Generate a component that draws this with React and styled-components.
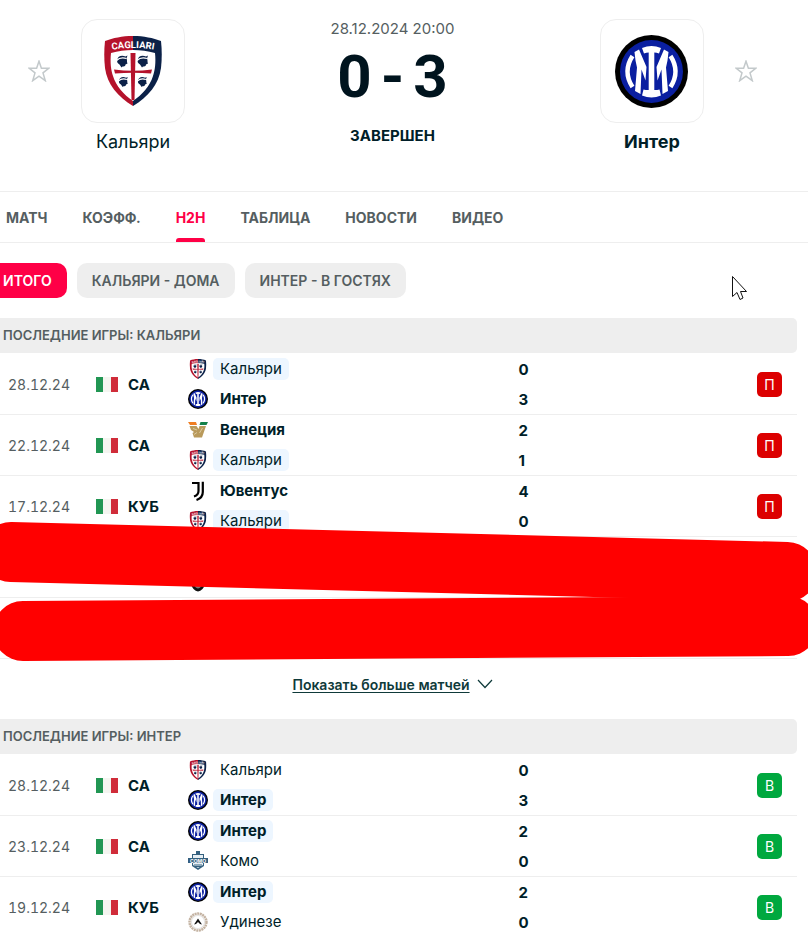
import React from 'react';
import styled, { createGlobalStyle } from 'styled-components';

const GlobalStyle = createGlobalStyle`
  * {
    box-sizing: border-box;
    margin: 0;
    padding: 0;
  }
  body {
    background: #fff;
    color: #001e28;
    font-family: Inter, "Liberation Sans", sans-serif;
  }
  button {
    border: 0;
    font-family: inherit;
    cursor: pointer;
  }
`
const Window = styled.div`
  position: relative;
  height: 100vh;
  overflow: hidden;
`
const Header = styled.header`
  display: flex;
  justify-content: space-between;
  align-items: flex-start;
  height: 192px;
  margin-left: -12px;
  padding: 19px 51px 0 40px;
  border-bottom: 1px solid #eee;
`
const Side = styled.div`
  display: flex;
  flex-direction: ${({ $away }) => ($away ? 'row-reverse' : 'row')};
  gap: 31px;
`
const StarButton = styled.button`
  display: flex;
  align-items: center;
  width: 22px;
  height: 104px;
  background: none;
`
const Team = styled.div`
  display: flex;
  flex-direction: column;
  align-items: center;
  width: 104px;
`
const Tile = styled.div`
  display: flex;
  align-items: center;
  justify-content: center;
  width: 104px;
  height: 104px;
  border: 1px solid #eee;
  border-radius: 16px;
`
const TeamName = styled.a`
  margin-top: 8px;
  color: #001e28;
  font-size: 18px;
  line-height: 22px;
  font-weight: ${({ $winner }) => ($winner ? 700 : 400)};
  text-decoration: none;
`
const Center = styled.div`
  display: flex;
  flex-direction: column;
  align-items: center;
`
const Time = styled.p`
  color: #555e61;
  font-size: 15px;
  line-height: 20px;
`
const Score = styled.p`
  display: flex;
  height: 76px;
  color: #00141e;
  font-family: Roboto, sans-serif;
  font-size: 60px;
  font-weight: 700;
  line-height: 76px;

  span {
    width: 38px;
    text-align: center;
  }
`
const Status = styled.p`
  margin-top: 11px;
  font-size: 15px;
  line-height: 20px;
  font-weight: 700;
`
const Tabs = styled.nav`
  display: flex;
  gap: 35px;
  height: 51px;
  padding-left: 6px;
  border-bottom: 1px solid #eee;
`
const Tab = styled.a`
  display: flex;
  flex-direction: column;
  justify-content: space-between;
  padding-top: 16px;
  color: ${({ $active }) => ($active ? '#ff0046' : '#555e61')};
  font-size: 14px;
  line-height: 20px;
  font-weight: 700;
  text-decoration: none;

  &::after {
    content: '';
    height: 4px;
    border-radius: 3px 3px 0 0;
    background: ${({ $active }) => ($active ? '#ff0046' : 'transparent')};
  }
`
const Main = styled.main`
  margin: 0 11px 0 -12px;
`
const Filters = styled.div`
  display: flex;
  gap: 10px;
  padding: 20px 0;
`
const Filter = styled.button`
  height: 35px;
  padding: 0 15px;
  border-radius: 10px;
  background: ${({ $active }) => ($active ? '#ff0046' : '#eee')};
  color: ${({ $active }) => ($active ? '#fff' : '#555e61')};
  font-size: 14px;
  font-weight: 600;
`
const Section = styled.section`
  position: relative;
`
const SectionTitle = styled.h2`
  height: 35px;
  margin-bottom: 1px;
  padding-left: 15px;
  border-radius: 5px;
  background: #eee;
  color: #555e61;
  font-size: 13px;
  font-weight: 600;
  line-height: 35px;
`
const Table = styled.table`
  width: 100%;
  table-layout: fixed;
  border-collapse: separate;
  border-spacing: 0;
`
const Cell = styled.td`
  height: 61px;
  border-bottom: 1px solid #eee;
  font-size: 15px;
`
const DateCell = styled(Cell)`
  width: 108px;
  padding-left: 20px;
  color: #555e61;
  font-size: 14px;
  font-variant-numeric: tabular-nums;
`
const LeagueCell = styled(Cell)`
  width: 92px;
  font-weight: 700;
`
const TeamsCell = styled(Cell)`
  width: 40%;
`
const ScoreCell = styled(Cell)`
  padding-left: 7px;
  font-weight: 700;
`
const ResultCell = styled(Cell)`
  width: 40px;
`
const League = styled.div`
  display: flex;
  align-items: center;
  gap: 10px;
`
const Flag = styled.span`
  width: 22px;
  height: 15px;
  background: linear-gradient(90deg, #219653 33%, #f4f5f0 33% 67%, #d02c3a 67%);
`
const Line = styled.div`
  display: flex;
  align-items: center;
  gap: 5px;
  height: 30px;
`
const Chip = styled.span`
  height: 22px;
  padding: 0 7px;
  border-radius: 5px;
  background: ${({ $marked }) => ($marked ? '#edf6ff' : 'transparent')};
  font-weight: ${({ $bold }) => ($bold ? 700 : 400)};
  line-height: 22px;
`
const Badge = styled.button`
  display: block;
  width: 25px;
  height: 25px;
  border-radius: 5px;
  background: ${({ $win }) => ($win ? '#00a83f' : '#dc0000')};
  color: #fff;
  font-size: 14px;
  line-height: 25px;
`
const More = styled.div`
  display: flex;
  justify-content: center;
  align-items: center;
  gap: 7px;
  height: 50px;
  margin-bottom: 10px;

  a {
    color: #0f3a3a;
    font-size: 14px;
    font-weight: 600;
    text-underline-offset: 2px;
  }
`
const Strokes = styled.svg`
  position: absolute;
  top: 200px;
  left: 0;
  width: 100%;
  height: 150px;
  overflow: visible;
  pointer-events: none;
`
const Cursor = styled.svg`
  position: absolute;
  top: 275px;
  left: 731px;
`

const Star = () => (
  <svg width="22" height="22" viewBox="0 0 22 22" fill="none" stroke="#c3c9cb" strokeWidth="1.5">
    <path d="M11 1.2 13.4 8.2H21L15 12.9 17.3 20.7 11 16.2 4.7 20.7 7 12.9 1 8.2H8.6Z" />
  </svg>
)

const Head = ({ x, y, s = 1 }) => (
  <g transform={`translate(${x} ${y}) scale(${s})`}>
    <path d="M-5-2C-5-5-1-7 3-5L5-6 4-3C5-1 4 0 5 2L3 3C3 5 1 5 0 5L-1 6-3 3C-5 2-6 0-5-2Z" fill="#0b2148" />
    <path d="M-6-1C-3-4 1-4 4-3" stroke="#fff" strokeWidth="1.3" fill="none" />
  </g>
)

const Cagliari = ({ w, h }) => (
  <svg width={w} height={h} viewBox="0 0 58 70">
    <path d="M29 0C18 0 9 2 1 5 0 14 0 23 1 32 3 48 14 61 29 70Z" fill="#b5122b" />
    <path d="M29 0C40 0 49 2 57 5 58 14 58 23 57 32 55 48 44 61 29 70Z" fill="#0b2148" />
    <path d="M7 17C21 13 37 13 51 17 52 27 51 34 49 40 46 50 38 59 29 65 20 59 12 50 9 40 7 34 6 27 7 17Z" fill="#fff" />
    <path d="M26.500 17H31.500L30.500 64H27.500Z" fill="#b5122b" />
    <path d="M10 33.500Q29 36 48 33.500L47 37.500Q29 36 11 37.500Z" fill="#b5122b" />
    <Head x={18.500} y={25.500} />
    <Head x={39} y={25.500} />
    <Head x={19.500} y={46} s={0.850} />
    <Head x={38.500} y={46} s={0.850} />
    <path id="arc" d="M4 14.500Q29 9.500 54 14.500" fill="none" />
    <text fill="#fff" fontSize="9.500" fontWeight="700" fontFamily="Roboto, sans-serif" textAnchor="middle">
      <textPath href="#arc" startOffset="50%">CAGLIARI</textPath>
    </text>
  </svg>
)

const InterCrest = ({ w }) => (
  <svg width={w} height={w} viewBox="-36.500 -36.500 73 73">
    <circle r="36.500" fill="#000" />
    <circle r="31.500" fill="#0a1fa0" />
    <g fill="none" stroke="#fff" strokeWidth="4.500">
      <path d="M-19-15.500Q-29 0-19 15.500" />
      <path d="M19-15.500Q29 0 19 15.500" />
    </g>
    <g fill="#fff">
      <path d="M-9.500-23.500Q0-27.500 9.500-23.500L7.500-18Q5-19 2.800-19V18.500Q6 18.500 8 18L9.500 24Q0 28-9.500 24L-8 18Q-6 18.500-2.800 18.500V-19Q-5-19-7.500-18Z" />
      <path d="M-17-19.500-12.500-22-5-4.500-6 9-10-2-11 22.500-16.500 19.500-14.500-4-16-11Z" />
      <path d="M17-19.500 12.500-22 5-4.500 6 9 10-2 11 22.500 16.500 19.500 14.500-4 16-11Z" />
    </g>
  </svg>
)

const Venezia = () => (
  <svg width="20" height="20" viewBox="0 0 20 20">
    <path d="M0 2H8L9 5H2Z" fill="#ef7d22" />
    <path d="M12.500 2H20L18.500 5H11.500Z" fill="#12804a" />
    <path d="M1.500 6H8.500L10.500 9 11.500 6H18L14 17.500H6L4.500 13 6 12 3 10Z" fill="#b99a5b" />
    <path d="M5 8.500 9 10M6 14.500 9 12.500M14.500 8 11.500 13" stroke="#e5d4ae" strokeWidth="0.800" />
  </svg>
)

const Juventus = () => (
  <svg width="20" height="20" viewBox="0 0 20 20" fill="none" stroke="#000" strokeWidth="2.200">
    <path d="M4 2H10.500V10Q10.500 14 6 15.500" />
    <path d="M14.800 0.800V11Q14.800 17 8.500 19" />
  </svg>
)

const Como = () => (
  <svg width="20" height="20" viewBox="0 0 20 20">
    <path d="M8 0H12V3H16V7H20V12H16V15L10 19 4 15V12H0V7H4V3H8Z" fill="#34607f" />
    <path d="M5 4H15V14L10 17 5 14Z" fill="#e7eff4" />
    <path d="M1 7H19V12H1Z" fill="#34607f" />
    <path d="M6 14H14M7 15.500H13" stroke="#34607f" />
    <text x="10" y="11.500" fill="#fff" fontSize="5" fontWeight="700" textAnchor="middle">COMO</text>
  </svg>
)

const Udinese = () => (
  <svg width="20" height="20" viewBox="0 0 20 20">
    <circle cx="10" cy="10" r="8.500" fill="#f4f1ee" stroke="#c4b3a2" strokeWidth="2.400" strokeDasharray="2 0.600" />
    <circle cx="10" cy="10" r="6.500" fill="#fff" stroke="#ccc" strokeWidth="0.500" />
    <path d="M6 12.500 10 6.500 14 12.500 12 12 10 10 8 12Z" fill="#111" />
  </svg>
)

const DarkCrest = () => (
  <svg width="20" height="20" viewBox="0 0 20 20">
    <path d="M3 1H17V12Q15 19 10 19.500 5 19 3 12Z" fill="#111" />
    <path d="M6 4H14V12Q13 16 10 16.500 7 16 6 12Z" fill="#777" />
  </svg>
)

const crests = {
  'Кальяри': <Cagliari w={20} h={20} />,
  'Интер': <InterCrest w={20} />,
  'Венеция': <Venezia />,
  'Ювентус': <Juventus />,
  'Комо': <Como />,
  'Удинезе': <Udinese />,
}

const tabs = ['МАТЧ', 'КОЭФФ.', 'H2H', 'ТАБЛИЦА', 'НОВОСТИ', 'ВИДЕО']
const filters = ['ИТОГО', 'КАЛЬЯРИ - ДОМА', 'ИНТЕР - В ГОСТЯХ']

const cagliariGames = [
  { date: '28.12.24', league: 'СА', teams: ['Кальяри', 'Интер'], score: [0, 3] },
  { date: '22.12.24', league: 'СА', teams: ['Венеция', 'Кальяри'], score: [2, 1] },
  { date: '17.12.24', league: 'КУБ', teams: ['Ювентус', 'Кальяри'], score: [4, 0] },
]
const interGames = [
  { date: '28.12.24', league: 'СА', teams: ['Кальяри', 'Интер'], score: [0, 3] },
  { date: '23.12.24', league: 'СА', teams: ['Интер', 'Комо'], score: [2, 0] },
  { date: '19.12.24', league: 'КУБ', teams: ['Интер', 'Удинезе'], score: [2, 0] },
]

const Game = ({ game, team }) => {
  const winner = game.score[0] > game.score[1] ? 0 : 1
  const win = game.teams[winner] === team
  return (
    <tr>
      <DateCell>{game.date}</DateCell>
      <LeagueCell>
        <League><Flag />{game.league}</League>
      </LeagueCell>
      <TeamsCell>
        {game.teams.map((name, index) => (
          <Line key={name}>
            {crests[name]}
            <Chip $marked={name === team} $bold={index === winner}>{name}</Chip>
          </Line>
        ))}
      </TeamsCell>
      <ScoreCell>
        {game.score.map((goals, index) => <Line key={index}>{goals}</Line>)}
      </ScoreCell>
      <ResultCell>
        <Badge $win={win}>{win ? 'В' : 'П'}</Badge>
      </ResultCell>
    </tr>
  )
}

const App = () => (
  <Window>
    <GlobalStyle />
    <Header>
      <Side>
        <StarButton aria-label="Кальяри"><Star /></StarButton>
        <Team>
          <Tile><Cagliari w={58} h={70} /></Tile>
          <TeamName href="#cagliari">Кальяри</TeamName>
        </Team>
      </Side>
      <Center>
        <Time>28.12.2024 20:00</Time>
        <Score><span>0</span><span>-</span><span>3</span></Score>
        <Status>ЗАВЕРШЕН</Status>
      </Center>
      <Side $away>
        <StarButton aria-label="Интер"><Star /></StarButton>
        <Team>
          <Tile><InterCrest w={73} /></Tile>
          <TeamName href="#inter" $winner>Интер</TeamName>
        </Team>
      </Side>
    </Header>
    <Tabs>
      {tabs.map((tab) => (
        <Tab key={tab} href={`#${tab}`} $active={tab === 'H2H'}>{tab}</Tab>
      ))}
    </Tabs>
    <Main>
      <Filters>
        {filters.map((filter, index) => (
          <Filter key={filter} $active={index === 0}>{filter}</Filter>
        ))}
      </Filters>
      <Section>
        <SectionTitle>ПОСЛЕДНИЕ ИГРЫ: КАЛЬЯРИ</SectionTitle>
        <Table>
          <tbody>
            {cagliariGames.map((game) => <Game key={game.date} game={game} team="Кальяри" />)}
            <tr>
              <Cell colSpan="2" />
              <Cell>
                <Line />
                <Line><DarkCrest /></Line>
              </Cell>
              <Cell colSpan="2" />
            </tr>
            <tr>
              <Cell colSpan="5" />
            </tr>
          </tbody>
        </Table>
        {/* marker strokes over the last two games */}
        <Strokes stroke="#f00" strokeWidth="60" strokeLinecap="round">
          <line x1="23" y1="34" x2="799" y2="54" />
          <line x1="35" y1="113" x2="800" y2="108" />
        </Strokes>
      </Section>
      <More>
        <a href="#more">Показать больше матчей</a>
        <svg width="16" height="10" viewBox="0 0 16 10" fill="none" stroke="#0f3a3a" strokeWidth="1.200">
          <path d="M1 1 8 8.500 15 1" />
        </svg>
      </More>
      <Section>
        <SectionTitle>ПОСЛЕДНИЕ ИГРЫ: ИНТЕР</SectionTitle>
        <Table>
          <tbody>
            {interGames.map((game) => <Game key={game.date} game={game} team="Интер" />)}
          </tbody>
        </Table>
      </Section>
    </Main>
    <Cursor width="17" height="26" viewBox="0 0 17 26">
      <path d="M1.500 1.500V21.500L6 17.500 9 24.500 12 23 9.500 16.500H15.500Z" fill="#fff" stroke="#111" />
    </Cursor>
  </Window>
)

export default App;
